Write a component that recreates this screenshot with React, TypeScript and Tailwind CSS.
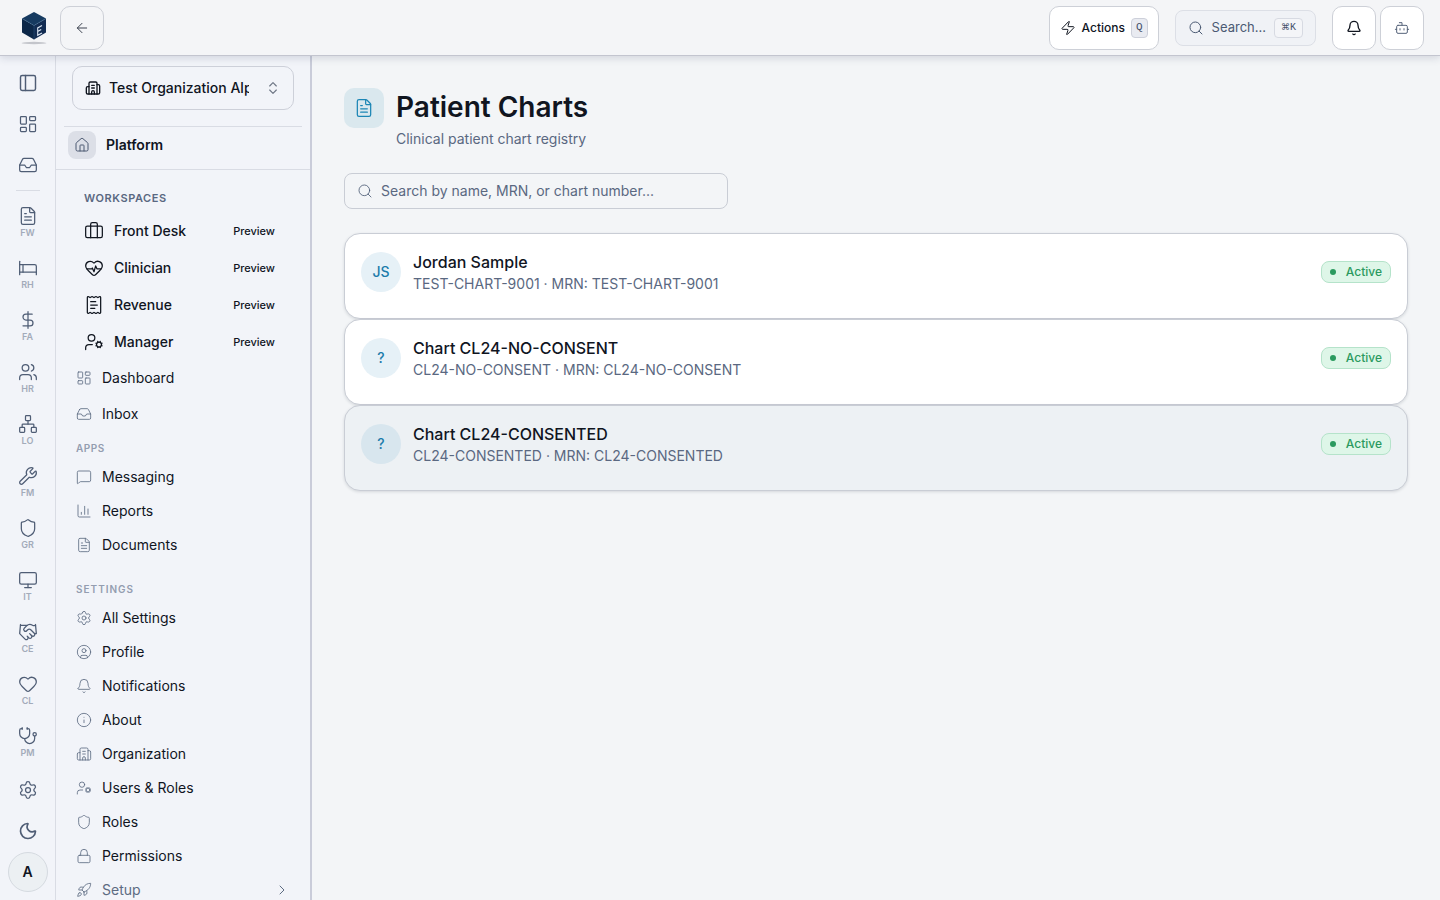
import type { ComponentType } from 'react';
import {
  ArrowLeft,
  Bed,
  Bell,
  Bot,
  Briefcase,
  Building2,
  ChartColumn,
  ChevronRight,
  ChevronsUpDown,
  CircleUser,
  DollarSign,
  FileText,
  Handshake,
  Heart,
  HeartPulse,
  House,
  Inbox,
  Info,
  LayoutDashboard,
  Lock,
  MessageSquare,
  Monitor,
  Moon,
  Network,
  PanelLeft,
  ReceiptText,
  Rocket,
  Search,
  Settings,
  Shield,
  Stethoscope,
  UserCog,
  Users,
  Wrench,
  Zap,
} from 'lucide-react';

type Icon = ComponentType<{ className?: string; strokeWidth?: number }>;
type NavItem = { label: string; icon: Icon; strokeWidth?: number };

const railTop: NavItem[] = [
  { label: 'Toggle sidebar', icon: PanelLeft, strokeWidth: 1.75 },
  { label: 'Dashboard', icon: LayoutDashboard },
  { label: 'Inbox', icon: Inbox },
];

const railModules: NavItem[] = [
  { label: 'FW', icon: FileText },
  { label: 'RH', icon: Bed },
  { label: 'FA', icon: DollarSign },
  { label: 'HR', icon: Users },
  { label: 'LO', icon: Network },
  { label: 'FM', icon: Wrench },
  { label: 'GR', icon: Shield },
  { label: 'IT', icon: Monitor },
  { label: 'CE', icon: Handshake },
  { label: 'CL', icon: Heart },
  { label: 'PM', icon: Stethoscope },
];

const workspaces: NavItem[] = [
  { label: 'Front Desk', icon: Briefcase },
  { label: 'Clinician', icon: HeartPulse },
  { label: 'Revenue', icon: ReceiptText },
  { label: 'Manager', icon: UserCog },
];

const general: NavItem[] = [
  { label: 'Dashboard', icon: LayoutDashboard },
  { label: 'Inbox', icon: Inbox },
];

const apps: NavItem[] = [
  { label: 'Messaging', icon: MessageSquare },
  { label: 'Reports', icon: ChartColumn },
  { label: 'Documents', icon: FileText },
];

const settings: NavItem[] = [
  { label: 'All Settings', icon: Settings },
  { label: 'Profile', icon: CircleUser },
  { label: 'Notifications', icon: Bell },
  { label: 'About', icon: Info },
  { label: 'Organization', icon: Building2 },
  { label: 'Users & Roles', icon: UserCog },
  { label: 'Roles', icon: Shield },
  { label: 'Permissions', icon: Lock },
];

const charts = [
  { initials: 'JS', name: 'Jordan Sample', number: 'TEST-CHART-9001', highlighted: false },
  { initials: '?', name: 'Chart CL24-NO-CONSENT', number: 'CL24-NO-CONSENT', highlighted: false },
  { initials: '?', name: 'Chart CL24-CONSENTED', number: 'CL24-CONSENTED', highlighted: true },
];

function Logo() {
  return (
    <svg className="h-9 w-7" viewBox="0 0 28 36" fill="none" aria-hidden="true">
      <path d="M14 2 26 8.5 14 15.5 2 8.5Z" fill="#163a60" />
      <path d="M2 8.5 14 15.5V29.5L2 22.5Z" fill="#0c2748" />
      <path d="M26 8.5 14 15.5V29.5L26 22.5Z" fill="#122c52" />
      <path d="M2 8.5 14 15.5 26 8.5" stroke="#4a7aa3" strokeWidth="0.6" strokeDasharray="1.5 0.7" />
      <path d="M14 15.5V29.5" stroke="#2b5680" strokeWidth="0.5" />
      <path d="M22 15.5 17.700 17.900V25.300L22 22.900M17.700 21.600 21.200 19.600" stroke="#dbe6f2" strokeWidth="1.1" />
      <ellipse cx="14" cy="33" rx="12.500" ry="1.200" fill="#c3c5cb" />
    </svg>
  );
}

function Header() {
  return (
    <header className="relative z-10 flex h-14 shrink-0 items-center border-b border-[#c3c5cf] bg-[#f4f5f7] pr-4 pl-5 shadow-[0_2px_8px_rgba(30,41,80,0.16)]">
      <a href="#home" aria-label="Home">
        <Logo />
      </a>
      <button
        aria-label="Go back"
        className="ml-3 flex size-11 items-center justify-center rounded-[10px] border border-[#cdd0d7] text-[#3c4350]"
      >
        <ArrowLeft className="size-4" strokeWidth={1.5} />
      </button>

      <div className="ml-auto flex items-center gap-4">
        <button className="flex h-11 items-center gap-1.5 rounded-[10px] border border-[#cdd0d7] bg-white px-2.5 text-xs font-medium text-[#10151f]">
          <Zap className="size-4" strokeWidth={1.5} />
          Actions
          <kbd className="flex h-5 items-center rounded border border-[#cdd0da] bg-[#e9ebf1] px-1 font-['Liberation_Mono',monospace] text-[11px] text-[#43506a]">
            Q
          </kbd>
        </button>
        <button className="flex h-9 items-center gap-2 rounded-lg border border-[#dcdfe6] bg-[#f0f2f6] px-3 text-xs text-[#4b5a73]">
          <Search className="size-4" strokeWidth={1.5} />
          <span className="text-[13px]">Search...</span>
          <kbd className="flex h-5 items-center rounded border border-[#d7dae2] bg-[#f4f5f8] px-1.5 font-['Liberation_Mono','DejaVu_Sans',monospace] text-[10px] text-[#43506a]">
            <span className="text-[9px]">⌘</span>K
          </kbd>
        </button>
        <div className="flex gap-1">
          <button
            aria-label="Notifications"
            className="flex size-11 items-center justify-center rounded-[10px] border border-[#cdd0d7] bg-white text-[#10151f]"
          >
            <Bell className="size-4" strokeWidth={2} />
          </button>
          <button
            aria-label="Assistant"
            className="flex size-11 items-center justify-center rounded-[10px] border border-[#cdd0d7] bg-white text-[#56637a]"
          >
            <Bot className="size-4" strokeWidth={1.5} />
          </button>
        </div>
      </div>
    </header>
  );
}

function RailButton({ label, icon: Icon, strokeWidth = 1.5 }: NavItem) {
  return (
    <button aria-label={label} className="flex size-10 shrink-0 items-center justify-center">
      <Icon className="size-5" strokeWidth={strokeWidth} />
    </button>
  );
}

function Rail() {
  return (
    <nav
      aria-label="Modules"
      className="flex w-14 shrink-0 flex-col items-center border-r border-[#d9dce4] bg-[#f2f4f9] pt-[7px] pb-2 text-[#4f5d75]"
    >
      <div className="flex flex-col gap-px">
        {railTop.map((item) => (
          <RailButton key={item.label} {...item} />
        ))}
      </div>
      <hr className="my-[5px] w-6 border-[#d9dce4]" />
      {railModules.map(({ label, icon: Icon }) => (
        <a key={label} href={`#${label}`} className="flex h-13 shrink-0 flex-col items-center gap-px pt-2.5">
          <Icon className="size-5" strokeWidth={1.5} />
          <span className="text-[9px] leading-3 font-semibold text-[#a3abba]">{label}</span>
        </a>
      ))}
      <div className="mt-auto flex flex-col items-center gap-px">
        <RailButton label="Settings" icon={Settings} />
        <RailButton label="Dark mode" icon={Moon} strokeWidth={2} />
        <button
          aria-label="Account"
          className="flex size-10 items-center justify-center rounded-full border border-[#d5dae0] bg-[#ecf0f3] text-sm font-semibold text-[#10151f]"
        >
          A
        </button>
      </div>
    </nav>
  );
}

function SidebarLink({ label, icon: Icon }: NavItem) {
  return (
    <a href={`#${label}`} className="flex h-full items-center gap-2.5 pl-5 text-sm text-[#10151f]">
      <Icon className="size-4 text-[#5d6b82]" strokeWidth={1.25} />
      {label}
    </a>
  );
}

function Sidebar() {
  return (
    <aside className="flex w-64 shrink-0 flex-col overflow-hidden border-r-2 border-[#c9ccd9] bg-[#f2f4f9]">
      <div className="mx-2 shrink-0 border-b border-[#d9dce4] px-2 pt-2.5 pb-4">
        <button className="flex h-11 w-full items-center gap-2 rounded-[10px] border border-[#cdd0d9] px-3 text-sm font-medium text-[#10151f]">
          <Building2 className="size-4 shrink-0" strokeWidth={2} />
          <span className="mr-2 flex-1 overflow-hidden text-left whitespace-nowrap">Test Organization Alpha</span>
          <ChevronsUpDown className="size-4 shrink-0 text-[#6f7786]" strokeWidth={1.75} />
        </button>
      </div>
      <div className="flex shrink-0 items-center gap-2.5 border-b border-[#d9dce4] px-3 pt-1 pb-2.5">
        <span className="flex size-7 items-center justify-center rounded-lg bg-[#dcdfe7] text-[#4b5870]">
          <House className="size-4" strokeWidth={1.5} />
        </span>
        <span className="text-sm font-semibold text-[#10151f]">Platform</span>
      </div>

      <nav aria-label="Platform" className="min-h-0 flex-1 overflow-hidden">
        <h2 className="mt-5 pl-7 text-[11px] leading-4 font-semibold tracking-wider text-[#5a6881]">WORKSPACES</h2>
        <ul className="mt-1.5">
          {workspaces.map(({ label, icon: Icon }) => (
            <li key={label} className="h-[37px]">
              <a href={`#${label}`} className="flex h-full items-center gap-2.5 pr-[35px] pl-7 text-sm font-medium text-[#10151f]">
                <Icon className="size-5" strokeWidth={1.5} />
                {label}
                <span className="ml-auto text-[11px] leading-4">Preview</span>
              </a>
            </li>
          ))}
        </ul>
        <ul>
          {general.map((item) => (
            <li key={item.label} className="h-9">
              <SidebarLink {...item} />
            </li>
          ))}
        </ul>
        <h2 className="mt-2 pl-5 text-[10px] leading-4 font-semibold tracking-wider text-[#949db0]">APPS</h2>
        <ul className="mt-1">
          {apps.map((item) => (
            <li key={item.label} className="h-[34px]">
              <SidebarLink {...item} />
            </li>
          ))}
        </ul>
        <h2 className="mt-[19px] pl-5 text-[10px] leading-4 font-semibold tracking-widest text-[#949db0]">SETTINGS</h2>
        <ul className="mt-1">
          {settings.map((item) => (
            <li key={item.label} className="h-[34px]">
              <SidebarLink {...item} />
            </li>
          ))}
        </ul>
        <button className="flex h-[34px] w-full items-center gap-2.5 px-5 text-sm text-[#5d6b82]">
          <Rocket className="size-4" strokeWidth={1.25} />
          Setup
          <ChevronRight className="ml-auto size-4" strokeWidth={1.5} />
        </button>
      </nav>
    </aside>
  );
}

function ChartCard({ initials, name, number, highlighted }: (typeof charts)[number]) {
  return (
    <a
      href={`#${number}`}
      className={`flex items-center gap-3 rounded-2xl border border-[#c9cdd5] px-4 pt-4 pb-6 shadow-[0_1px_3px_rgba(30,41,60,0.14)] ${
        highlighted ? 'bg-[#edf1f4]' : 'bg-white'
      }`}
    >
      <span
        className={`flex size-10 shrink-0 items-center justify-center rounded-full text-sm font-medium text-[#1c7cab] ${
          highlighted ? 'bg-[#d8e6ee]' : 'bg-[#e6f1f7]'
        }`}
      >
        {initials}
      </span>
      <div className="min-w-0 flex-1">
        <p className="text-base leading-6 font-medium text-[#10151f]">{name}</p>
        <p className="text-sm leading-5 text-[#5a6881]">
          {number} · MRN: {number}
        </p>
      </div>
      <span className="flex items-center gap-2.5 rounded-lg border border-[#b5e3ca] bg-[#def6e8] px-2 text-xs leading-5 font-medium text-[#2b9a5f]">
        <span className="size-1.5 rounded-full bg-[#2b9a5f]" />
        Active
      </span>
    </a>
  );
}

export default function App() {
  return (
    <div className="flex h-screen flex-col overflow-hidden bg-[#f3f5f7] font-[Inter,sans-serif]">
      <Header />
      <div className="flex min-h-0 flex-1">
        <Rail />
        <Sidebar />
        <main className="min-w-0 flex-1 overflow-auto p-8">
          <div className="flex items-start gap-3">
            <span className="flex size-10 shrink-0 items-center justify-center rounded-[10px] bg-[#dae8ee] text-[#1c86b5]">
              <FileText className="size-5" strokeWidth={1.5} />
            </span>
            <div>
              <h1 className="text-[28px] leading-[38px] font-semibold text-[#10151f]">Patient Charts</h1>
              <p className="mt-[3px] text-sm leading-5 text-[#5a6881]">Clinical patient chart registry</p>
            </div>
          </div>

          <label
            htmlFor="chart-search"
            aria-label="Search charts"
            className="mt-6 flex h-9 max-w-sm items-center gap-2 rounded-lg border border-[#c9cdd5] px-3 text-[#4b5a73]"
          >
            <Search className="size-4 shrink-0" strokeWidth={1.25} />
            <input
              id="chart-search"
              type="text"
              placeholder="Search by name, MRN, or chart number..."
              className="w-full bg-transparent text-sm outline-none placeholder:text-[#5a6881]"
            />
          </label>

          <div className="mt-6">
            {charts.map((chart) => (
              <ChartCard key={chart.number} {...chart} />
            ))}
          </div>
        </main>
      </div>
    </div>
  );
}
